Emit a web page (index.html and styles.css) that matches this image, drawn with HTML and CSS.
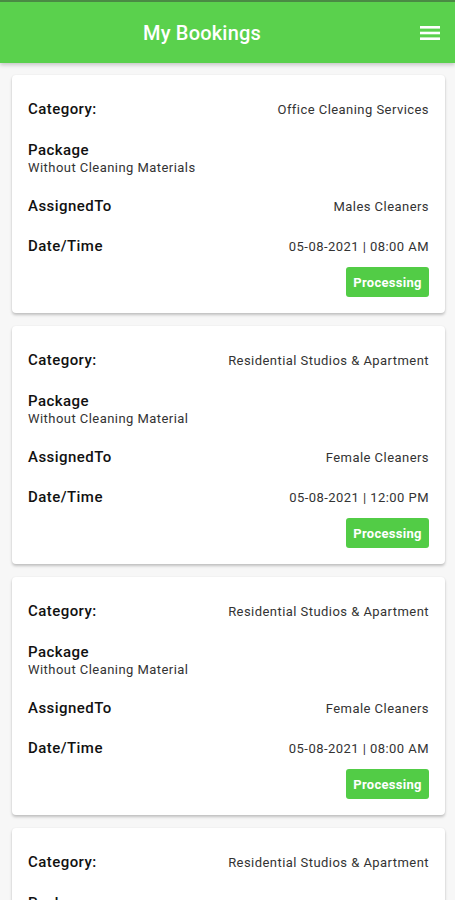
FILE: index.html
```html
<!DOCTYPE html>
<html>
<head>
<meta charset="utf-8">
<link rel="stylesheet" href="styles.css">
</head>
<body>
<header class="appbar">
  <div class="title">My Bookings</div>
  <svg class="menu" width="20" height="16" viewBox="0 0 20 16"><rect x="0" y="1" width="20" height="2.6" fill="#fff"/><rect x="0" y="6.7" width="20" height="2.6" fill="#fff"/><rect x="0" y="12.4" width="20" height="2.6" fill="#fff"/></svg>
</header>
<main class="list">
  <div class="card">
    <div class="row"><span class="label">Category:</span><span class="value">Office Cleaning Services</span></div>
    <div class="pkg"><span class="label">Package</span><span class="sub">Without Cleaning Materials</span></div>
    <div class="row"><span class="label">AssignedTo</span><span class="value">Males Cleaners</span></div>
    <div class="row"><span class="label">Date/Time</span><span class="value">05-08-2021 | 08:00 AM</span></div>
    <div class="actions"><span class="status">Processing</span></div>
  </div>
  <div class="card">
    <div class="row"><span class="label">Category:</span><span class="value">Residential Studios &amp; Apartment</span></div>
    <div class="pkg"><span class="label">Package</span><span class="sub">Without Cleaning Material</span></div>
    <div class="row"><span class="label">AssignedTo</span><span class="value">Female Cleaners</span></div>
    <div class="row"><span class="label">Date/Time</span><span class="value">05-08-2021 | 12:00 PM</span></div>
    <div class="actions"><span class="status">Processing</span></div>
  </div>
  <div class="card">
    <div class="row"><span class="label">Category:</span><span class="value">Residential Studios &amp; Apartment</span></div>
    <div class="pkg"><span class="label">Package</span><span class="sub">Without Cleaning Material</span></div>
    <div class="row"><span class="label">AssignedTo</span><span class="value">Female Cleaners</span></div>
    <div class="row"><span class="label">Date/Time</span><span class="value">05-08-2021 | 08:00 AM</span></div>
    <div class="actions"><span class="status">Processing</span></div>
  </div>
  <div class="card">
    <div class="row"><span class="label">Category:</span><span class="value">Residential Studios &amp; Apartment</span></div>
    <div class="pkg"><span class="label">Package</span><span class="sub">Without Cleaning Material</span></div>
    <div class="row"><span class="label">AssignedTo</span><span class="value">Female Cleaners</span></div>
    <div class="row"><span class="label">Date/Time</span><span class="value">05-08-2021 | 08:00 AM</span></div>
    <div class="actions"><span class="status">Processing</span></div>
  </div>
</main>
</body>
</html>
```
FILE: styles.css
```css
* { box-sizing: border-box; }
html, body { margin: 0; padding: 0; }
body {
  width: 455px;
  height: 900px;
  overflow: hidden;
  background: #f7f7f7;
  font-family: Roboto, "Liberation Sans", sans-serif;
  color: #111;
  border-top: 2px solid #4a8a44;
}
.appbar {
  height: 61px;
  background: #5ad14d;
  display: flex;
  align-items: center;
  justify-content: center;
  position: relative;
  box-shadow: 0 2px 4px rgba(0,0,0,0.2);
}
.title {
  color: #fff;
  font-size: 20px;
  font-weight: 500;
  letter-spacing: 0.2px;
  margin-right: 51px;
}
.menu {
  position: absolute;
  right: 15px;
  top: 23px;
}
.list {
  display: flex;
  flex-direction: column;
  gap: 13px;
  padding: 12px 10px 0 12px;
}
.card {
  background: #fff;
  border-radius: 4px;
  box-shadow: 0 2px 3px rgba(0,0,0,0.22), 0 0 2px rgba(0,0,0,0.06);
  padding: 25px 16px 16px 16px;
  height: 238px;
  flex-shrink: 0;
}
.row {
  display: flex;
  justify-content: space-between;
  align-items: center;
  height: 18px;
}
.label {
  font-size: 15px;
  font-weight: 500;
  letter-spacing: 0.45px;
  color: #111;
}
.value {
  font-size: 13px;
  letter-spacing: 0.45px;
  color: #333;
}
.pkg {
  display: flex;
  flex-direction: column;
  margin-top: 24px;
  margin-bottom: 21px;
}
.pkg .label { line-height: 17px; }
.sub {
  font-size: 13px;
  letter-spacing: 0.45px;
  color: #333;
  line-height: 17px;
}
.row + .row { margin-top: 22px; }
.actions {
  display: flex;
  justify-content: flex-end;
  margin-top: 12px;
}
.status {
  background: #52cc46;
  color: #fff;
  font-size: 13px;
  font-weight: 700;
  letter-spacing: 0.3px;
  border-radius: 3px;
  height: 30px;
  width: 83px;
  display: flex;
  align-items: center;
  justify-content: center;
}
```
